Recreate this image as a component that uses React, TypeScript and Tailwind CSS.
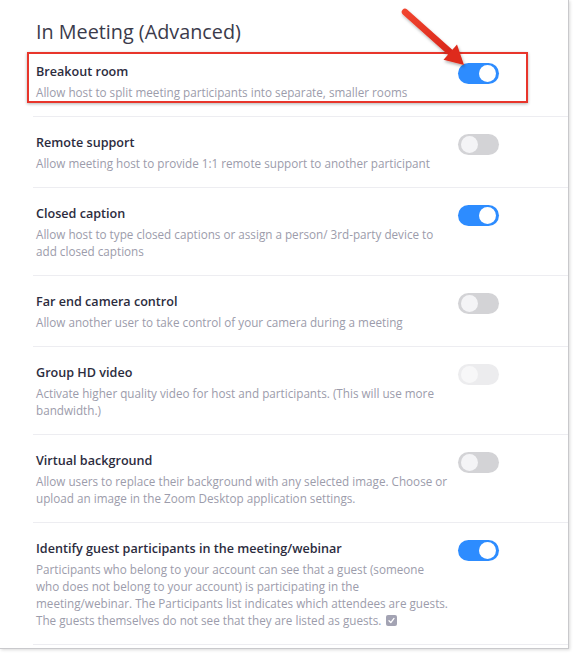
import React from "react";

type RowProps = {
  title: string;
  lines: React.ReactNode[];
  state: "on" | "off" | "disabled";
  highlight?: boolean;
};

function Toggle({ state }: { state: "on" | "off" | "disabled" }) {
  if (state === "on") {
    return (
      <div className="relative h-[21px] w-[41px] shrink-0 rounded-full bg-[#2d8cff]">
        <div className="absolute right-[3px] top-[2px] h-[17px] w-[17px] rounded-full bg-white" />
      </div>
    );
  }
  if (state === "off") {
    return (
      <div className="relative h-[21px] w-[41px] shrink-0 rounded-full bg-[#d3d3d6]">
        <div className="absolute left-[3px] top-[2px] h-[17px] w-[17px] rounded-full bg-[#f4f4f6]" />
      </div>
    );
  }
  return (
    <div className="relative h-[21px] w-[41px] shrink-0 rounded-full bg-[#ececee]">
      <div className="absolute left-[3px] top-[2px] h-[17px] w-[17px] rounded-full bg-[#f7f7f8]" />
    </div>
  );
}

function Row({ title, lines, state, highlight }: RowProps) {
  return (
    <div className="relative ml-[33px] border-b border-[#ededf1] pl-[3px] pr-[69px] pb-[15px] pt-[17px]">
      {highlight && (
        <div className="pointer-events-none absolute left-[-6px] top-[6px] h-[51px] w-[501px] border-2 border-[#e8352b] shadow-[0_1px_3px_rgba(0,0,0,0.3)]" />
      )}
      <div className="flex items-start justify-between">
        <div>
          <div className="whitespace-nowrap text-[12.6px] font-semibold leading-[18px] text-[#2c2c3e]">
            {title}
          </div>
          <div className="mt-[3px] text-[11.7px] leading-[17px] text-[#9c9cab]">
            {lines.map((l, i) => (
              <div key={i} className="whitespace-nowrap">
                {l}
              </div>
            ))}
          </div>
        </div>
        <Toggle state={state} />
      </div>
    </div>
  );
}

export default function App() {
  return (
    <div
      className="relative h-[654px] w-[575px] overflow-hidden bg-white"
      style={{ fontFamily: '"Open Sans", "Noto Sans", sans-serif' }}
    >
      <div className="h-[649px] w-[569px] border-b border-r border-[#c9c9cc] bg-white shadow-[1px_1px_3px_rgba(0,0,0,0.15)]">
        <div className="pl-[36px] pt-[18px]">
          <h1 className="h-[28px] text-[19.8px] font-normal leading-[28px] text-[#3b3b4b]">
            In Meeting (Advanced)
          </h1>
        </div>
        <Row
          title="Breakout room"
          lines={["Allow host to split meeting participants into separate, smaller rooms"]}
          state="on"
          highlight
        />
        <Row
          title="Remote support"
          lines={["Allow meeting host to provide 1:1 remote support to another participant"]}
          state="off"
        />
        <Row
          title="Closed caption"
          lines={[
            "Allow host to type closed captions or assign a person/ 3rd-party device to",
            "add closed captions",
          ]}
          state="on"
        />
        <Row
          title="Far end camera control"
          lines={["Allow another user to take control of your camera during a meeting"]}
          state="off"
        />
        <Row
          title="Group HD video"
          lines={[
            "Activate higher quality video for host and participants. (This will use more",
            "bandwidth.)",
          ]}
          state="disabled"
        />
        <Row
          title="Virtual background"
          lines={[
            "Allow users to replace their background with any selected image. Choose or",
            "upload an image in the Zoom Desktop application settings.",
          ]}
          state="off"
        />
        <Row
          title="Identify guest participants in the meeting/webinar"
          lines={[
            "Participants who belong to your account can see that a guest (someone",
            "who does not belong to your account) is participating in the",
            "meeting/webinar. The Participants list indicates which attendees are guests.",
            <span key="last" className="inline-flex items-center">
              The guests themselves do not see that they are listed as guests.
              <span className="ml-[5px] inline-flex h-[11px] w-[11px] items-center justify-center rounded-[2px] bg-[#a3a3b3]">
                <svg width="9" height="9" viewBox="0 0 9 9" fill="none">
                  <path d="M2 4.8 L3.8 6.6 L7 2.4" stroke="white" strokeWidth="1.3" strokeLinecap="round" strokeLinejoin="round" />
                </svg>
              </span>
            </span>,
          ]}
          state="on"
        />
      </div>
      <svg
        className="pointer-events-none absolute left-0 top-0"
        width="575"
        height="80"
        viewBox="0 0 575 80"
      >
        <defs>
          <filter id="sh" x="-20%" y="-20%" width="140%" height="140%">
            <feDropShadow dx="1" dy="2" stdDeviation="1.5" floodColor="#000" floodOpacity="0.3" />
          </filter>
          <linearGradient id="rg" x1="0" y1="0" x2="1" y2="1">
            <stop offset="0" stopColor="#f0442f" />
            <stop offset="1" stopColor="#d9261a" />
          </linearGradient>
        </defs>
        <g filter="url(#sh)">
          <line x1="405" y1="12" x2="451" y2="53" stroke="url(#rg)" strokeWidth="6.5" strokeLinecap="round" />
          <polygon points="464,65 443.5,59.8 457,44.5" fill="#de2b1d" />
        </g>
      </svg>
    </div>
  );
}
